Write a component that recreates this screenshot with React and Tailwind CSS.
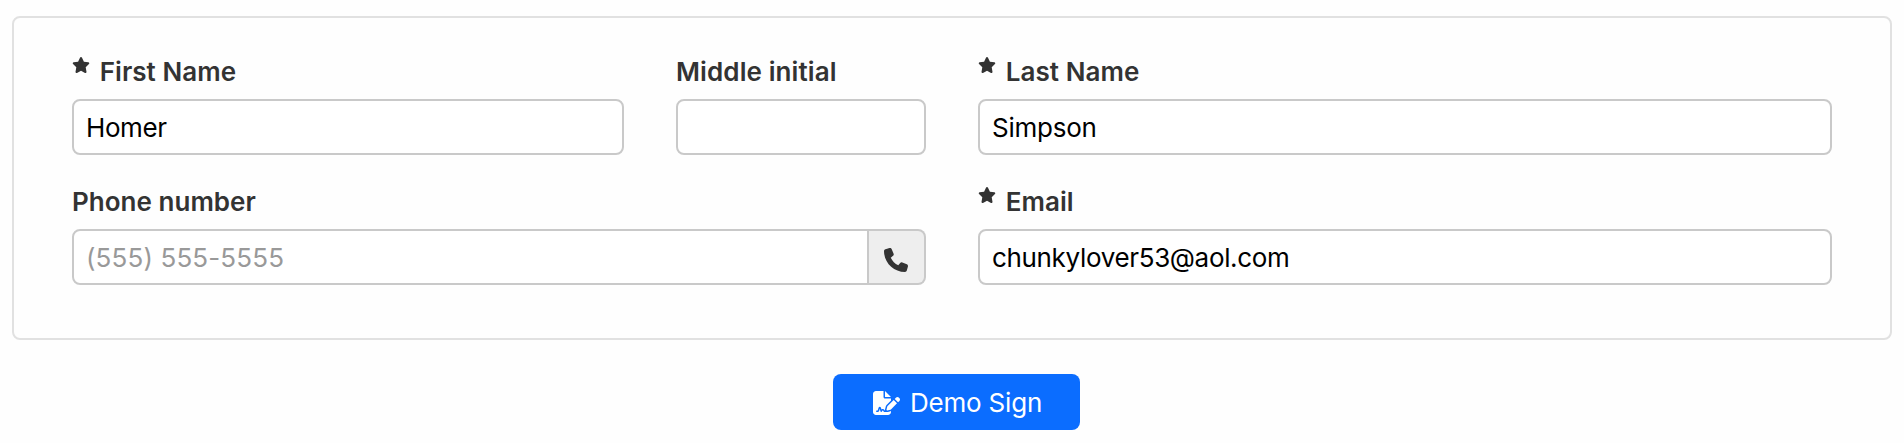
import { FaStar, FaPhone, FaFileSignature } from 'react-icons/fa6';

function Field({ label, required, labelClass = 'tracking-[0.06px]', className = '', children }) {
  return (
    <div className={className}>
      <label className={`flex h-12 leading-[41px] font-semibold text-[#333333] ${labelClass}`}>
        {required && (
          <span className="mr-[9.7px] pt-[6px]">
            <FaStar className="h-4 w-[18px]" />
          </span>
        )}
        <span className="whitespace-nowrap">{label}</span>
      </label>
      {children}
    </div>
  );
}

function TextInput({ className = 'rounded-lg', ...props }) {
  return (
    <input
      type="text"
      className={`block h-14 w-full min-w-0 border-2 border-[#c9c9c9] bg-white pt-px pr-3 pl-3 text-black outline-none placeholder:text-[#999999] ${className}`}
      {...props}
    />
  );
}

export default function App() {
  return (
    <form className="min-h-[443px] bg-[#fefefe] pt-4 pr-3 pl-3 font-['Inter',sans-serif] text-[26px]">
      <div className="h-[324px] rounded-lg border-2 border-[#e1e1e1] px-[58px] pt-[33px]">
        <div className="flex gap-[52px]">
          <Field label="First Name" required className="w-[552px]">
            <TextInput className="rounded-lg tracking-[-0.4px]" defaultValue="Homer" />
          </Field>
          <Field label="Middle initial" labelClass="tracking-[0.1px]" className="w-[250px]">
            <TextInput />
          </Field>
          <Field label="Last Name" required className="w-[854px]">
            <TextInput className="rounded-lg tracking-[-0.25px]" defaultValue="Simpson" />
          </Field>
        </div>
        <div className="mt-[26px] flex gap-[52px]">
          <Field label="Phone number" labelClass="tracking-[0.03px]" className="w-[854px]">
            <div className="flex">
              <TextInput className="rounded-l-lg tracking-[0.13px]" placeholder="(555) 555-5555" />
              <div className="flex h-14 w-[57px] shrink-0 items-center justify-center rounded-r-lg border-2 border-l-0 border-[#c9c9c9] bg-[#eeeeee] pt-[6px] pr-px text-[#333333]">
                <FaPhone className="size-6" />
              </div>
            </div>
          </Field>
          <Field label="Email" required className="w-[854px]">
            <TextInput className="rounded-lg tracking-[-0.34px]" defaultValue="chunkylover53@aol.com" />
          </Field>
        </div>
      </div>
      <button
        type="button"
        className="mt-[34px] ml-[821px] flex h-14 w-[247px] items-center rounded-lg bg-[#0b6dff] pl-10 leading-[31px] text-white"
      >
        <FaFileSignature className="mt-[2px] h-6 w-[27px]" />
        <span className="ml-[10px] pt-px tracking-[-0.2px] whitespace-nowrap">Demo Sign</span>
      </button>
    </form>
  );
}
